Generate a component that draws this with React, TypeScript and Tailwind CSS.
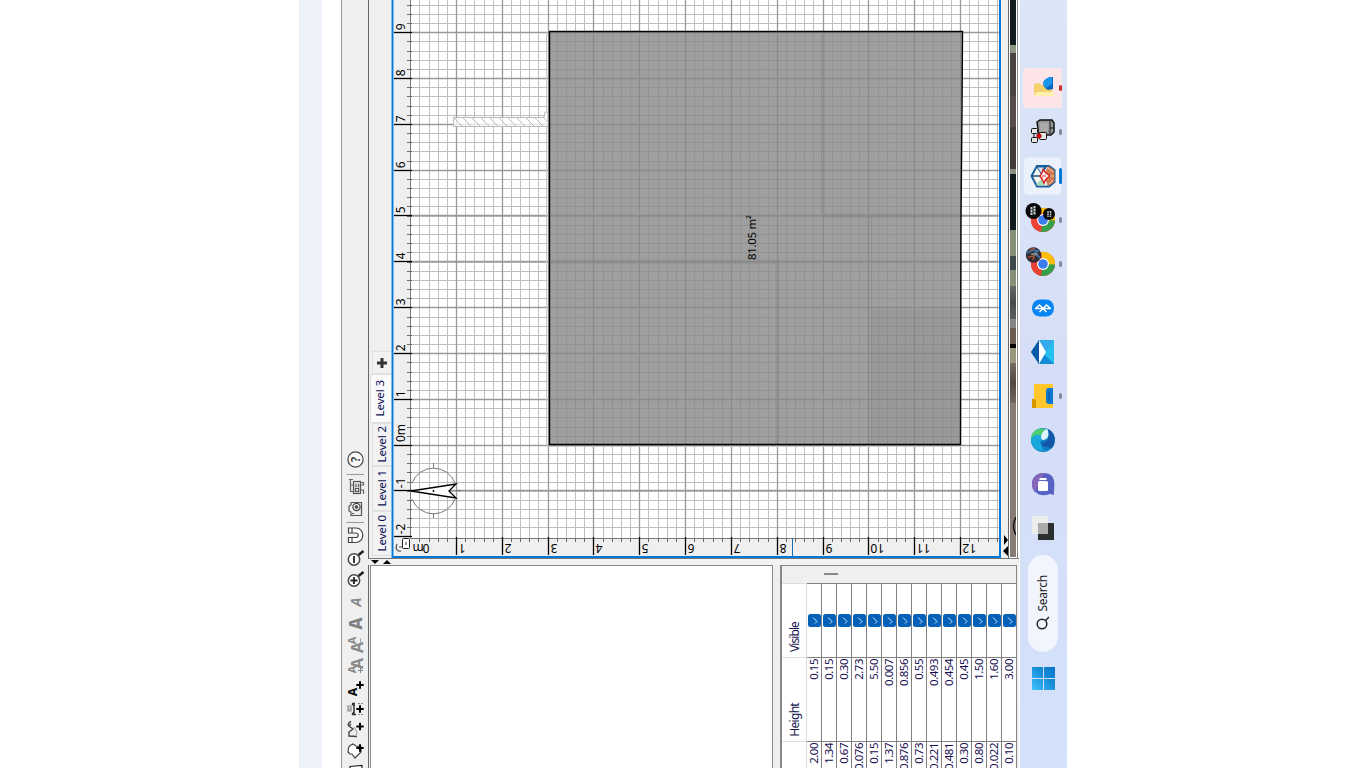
import React from "react";

const FONT = '"Noto Sans", "Open Sans", sans-serif';
const range = (a: number, b: number) => Array.from({ length: b - a + 1 }, (_, i) => a + i);
const px = (v: number) => Math.floor(v) + 0.5;
const yAt = (m: number) => px(445.4 - m * (m < 0 ? 45.3 : 45.9));
const xAt = (m: number) => px(410.7 + m * 45.82);

function Glyph({ h, children }: { h: number; children?: React.ReactNode }) {
  return (
    <svg width="26" height={h} viewBox={`-13 ${-h / 2} 26 ${h}`} className="block shrink-0 overflow-visible" fill="none" stroke="#444" strokeWidth="1.2">
      {children}
    </svg>
  );
}

function Letter({ x, y, size, color, weight = 700, italic = false }: { x: number; y: number; size: number; color: string; weight?: number; italic?: boolean }) {
  return (
    <text transform={`translate(${x} ${y}) rotate(-90)`} fontFamily={FONT} fontSize={size} fontWeight={weight} fontStyle={italic ? "italic" : "normal"} textAnchor="middle" fill={color} stroke="none">
      A
    </text>
  );
}

function Plus({ x = 5, y = -3, r = 3.7 }: { x?: number; y?: number; r?: number }) {
  return <path d={`M${x - r} ${y}h${2 * r}M${x} ${y - r}v${2 * r}`} stroke="#000" strokeWidth="2" />;
}

function Toolbar() {
  return (
    <div className="flex w-[27px] shrink-0 flex-col border-l border-[#999] bg-[#efefef] pt-[448px]">
      <Glyph h={24}>
        <circle cx="0.5" cy="-0.5" r="7.6" fill="#f8f8f8" />
        <text transform="translate(4.7 -0.5) rotate(-90)" textAnchor="middle" fontFamily={FONT} fontSize="12" fontWeight="600" fill="#333" stroke="none">?</text>
      </Glyph>
      <Glyph h={4}><path d="M-8.5 .5H9" stroke="#999" strokeWidth="1" /></Glyph>
      <Glyph h={22}>
        <rect x="-1.500" y="-5.500" width="7" height="12" fill="#ddd" stroke="#555" />
        <path d="M-4.500 -7.500V4.500H-2M-4.500 -2H-2M-2 -7.500H-6M5.500 -4.500H8.500V-2H5.500M5.500 3H8.500V7" stroke="#666" />
        <rect x="0.500" y="1.500" width="3" height="3" fill="#fff" stroke="#555" /><path d="M1 -3V0M3.500 -3V0" stroke="#666" />
      </Glyph>
      <Glyph h={22}>
        <path d="M-4 -6.500H6.500V6.500H-4V3L-6 2V-3L-4 -4Z" fill="#eee" stroke="#555" />
        <circle cx="1.5" cy="-2" r="3.6" stroke="#444" />
        <circle cx="1.5" cy="-2" r="1.2" fill="#666" stroke="#444" />
        <path d="M-3 4.500h2" />
      </Glyph>
      <Glyph h={4}><path d="M-8.5 .5H9" stroke="#999" strokeWidth="1" /></Glyph>
      <Glyph h={22}>
        <path d="M-6.5 -7H1C10 -7 10 7.5 1 7.5H-6.5V2.500H1C4 2.500 4 -2 1 -2H-6.5Z" fill="#fff" />
        <path d="M-3 -7v5M-3 2.500v5" />
      </Glyph>
      <Glyph h={2} />
      <Glyph h={22}>
        <circle cx="-1" cy="0.5" r="5.7" fill="#fff" strokeWidth="1.5" />
        <path d="M-1 -3v7" stroke="#222" strokeWidth="1.8" />
        <path d="M3.5 -4L8.5 -8" stroke="#222" strokeWidth="2.6" />
      </Glyph>
      <Glyph h={22}>
        <circle cx="-1" cy="-0.5" r="5.7" fill="#fff" strokeWidth="1.5" />
        <path d="M-1 -4v7M-4.5 -.5h7" stroke="#222" strokeWidth="1.8" />
        <path d="M3.5 -5L8.5 -9" stroke="#222" strokeWidth="2.6" />
      </Glyph>
      <Glyph h={21}><Letter x={6} y={-0.5} size={14} color="#888" italic /></Glyph>
      <Glyph h={21}><Letter x={7} y={0} size={17} color="#808080" weight={800} /></Glyph>
      <Glyph h={21}>
        <Letter x={7.5} y={3} size={16} color="#888" /><Letter x={1} y={-4} size={11} color="#888" />
        <path d="M5.500 -6v4" stroke="#999" strokeWidth="1" />
      </Glyph>
      <Glyph h={22}>
        <Letter x={7.5} y={-2.5} size={16} color="#888" /><Letter x={1} y={3.5} size={11} color="#888" />
        <path d="M3 4.500h5M5.500 2v5" stroke="#888" strokeWidth="1" />
      </Glyph>
      <Glyph h={22}><Letter x={2} y={4} size={12} color="#111" weight={800} /><Plus x={5} y={-3} /></Glyph>
      <Glyph h={20}>
        <path d="M-3 -5.500H0M-3 5.500H1M-3 -5.500L-1 -3M-3 5.500L-1 3M-1 -6V6" stroke="#333" strokeWidth="1.500" />
        <path d="M3 -5.500H8M3 5.500H8" stroke="#888" strokeDasharray="2 1" />
        <path d="M-7 -3h3v5h-3Z M-7 0h3" stroke="#888" />
        <Plus x={5} y={0} />
      </Glyph>
      <Glyph h={22}>
        <path d="M-4 -7.500C-7 -6 -7.500 -4 -6 -3L-2 0L-6 3V7L2 7.500M-6 -3L-4 -5" stroke="#444" strokeWidth="1.4" transform="translate(0 -1)" />
        <path d="M-1 -3L2 2L1 5" stroke="#aaa" /><Plus x={5} y={-3.5} />
      </Glyph>
      <Glyph h={20}>
        <path d="M-4 -6C-8 -4 -6 -2 -7 1L-5 3H-3L0 7L6 1V-4L1 -5L-2 -7Z" fill="#fff" />
        <Plus x={5} y={-3} />
      </Glyph>
      <Glyph h={16}><path d="M-5 -2.5L7 -3.5V9H-5Z" fill="#fff" stroke="#222" /></Glyph>
    </div>
  );
}

function Tab({ label, className }: { label: string; className: string }) {
  return (
    <div className={"flex shrink-0 items-center justify-center border border-r-0 border-[#e0e0e0] text-[#0c0c55] " + className}>
      <span className="rotate-180 whitespace-nowrap text-[11.5px] leading-[14px] tracking-[-0.1px] [writing-mode:vertical-rl]">{label}</span>
    </div>
  );
}

function LevelTabs() {
  return (
    <div className="flex w-[23px] shrink-0 flex-col items-end border-l border-[#666] bg-[#efefef] pt-[351px]">
      <div className="flex h-[23px] w-[19px] items-center justify-center border border-r-0 border-[#e0e0e0] bg-[#f2f2f2]">
        <svg width="12" height="12" viewBox="0 0 12 12"><path d="M1 6h10M6 1v10" stroke="#333" strokeWidth="3" /></svg>
      </div>
      <Tab label="Level 3" className="h-[49px] w-[21px] bg-[#fafafa] pr-[2px]" />
      <Tab label="Level 2" className="h-[43px] w-[19px] bg-[#f2f2f2]" />
      <Tab label="Level 1" className="h-[45px] w-[19px] bg-[#f2f2f2]" />
      <Tab label="Level 0" className="h-[45px] w-[19px] bg-[#f2f2f2]" />
    </div>
  );
}

function Plan() {
  const minorX = range(1, 64).map((i) => px(410.7 + i * 9.164));
  const minorY = range(-9, 48).map((i) => px(445.4 - i * 9.17));
  return (
    <svg width="610" height="558" viewBox="391 0 610 558" className="block shrink-0" fontFamily={FONT} fontSize="12">
      <defs>
        <pattern id="hatch" width="9" height="9" x="3" y="117" patternUnits="userSpaceOnUse"><path d="M0 0L9 9" stroke="#bdbdbd" strokeWidth="1" /></pattern>
      </defs>
      <rect x="391" width="610" height="558" fill="#fff" />
      <g stroke="#bebebe" strokeWidth="1">
        {minorX.map((x) => <path key={x} d={`M${x} 0V538`} />)}
        {minorY.map((y) => <path key={y} d={`M411 ${y}H999`} />)}
      </g>
      <g stroke="#999" strokeWidth="1.3">
        {range(1, 12).map((i) => <path key={i} d={`M${xAt(i)} 0V538`} />)}
        {range(-1, 9).map((i) => <path key={i} d={`M411 ${yAt(i)}H999`} />)}
      </g>
      <path d="M453.5 117.5H544L545 112H548V126.500H453.5Z" fill="#fff" fillOpacity=".75" />
      <path d="M453.5 117.5H544L545 112H548V126.500H453.5Z" fill="url(#hatch)" stroke="#bbb" />
      <path d="M546.5 32V111M546.5 126V446.5H961" stroke="#ccc" fill="none" />
      <path d="M549.5 31.5H962.5L961 216L960.5 444.5H549.5Z" fill="#878787" fillOpacity=".8" />
      <path d="M871 310H960V444H871Z" fill="#555" fillOpacity=".07" />
      <path d="M821.5 32V217H959M824 32V214H959M868.5 217V444M871.5 217V444M550 260H778.5V444M776 262V444M550 263H776" stroke="#777" strokeOpacity=".35" fill="none" />
      <path d="M549.5 31.5H962.5L962 110L961 216L960.5 444.5H549.5Z" fill="none" stroke="#000" strokeWidth="1.4" />
      <text transform="translate(756 260) rotate(-90)" fontSize="11.5" textLength="45" fill="#000">81.05 m²</text>

      <rect x="394" width="17" height="556" fill="#efefef" />
      <rect x="394" y="538" width="605" height="18" fill="#efefef" />
      <path d="M410.5 0V538.5H999" stroke="#777" fill="none" />
      <g stroke="#666">
        {minorX.map((x) => <path key={x} d={`M${x} 538V542`} />)}
        {minorY.map((y) => <path key={y} d={`M407 ${y}H412`} />)}
      </g>
      <g stroke="#000" strokeWidth="1.3">
        {range(1, 12).map((i) => <path key={i} d={`M${xAt(i)} 537V555`} />)}
        {range(-2, 9).map((i) => <path key={i} d={`M394 ${yAt(i)}H412`} />)}
      </g>
      {range(-2, 9).map((i) => (
        <text key={i} transform={`translate(405 ${yAt(i) - (i === 0 ? 3.5 : 2.2)}) rotate(-90)`}>{i === 0 ? "0m" : i}</text>
      ))}
      {range(0, 12).map((i) => (
        <text key={i} transform={`translate(${xAt(i) + 2} 544) rotate(180)`} textAnchor="end" textLength={i === 0 ? 17 : undefined}>{i === 0 ? "0m" : i}</text>
      ))}
      <path d="M792.5 538V556" stroke="#1670b8" />
      <path d="M397 544C395 549 397 552 401 551M399 547H404" fill="none" stroke="#555" strokeWidth="1.2" />
      <rect x="402.5" y="538.5" width="7" height="10" rx="1" fill="#fff" stroke="#222" />
      <path d="M406 542v3" stroke="#333" />

      <g fill="none" stroke="#777">
        <path d="M412 483A23 23 0 0 1 455 483M412 499A23 23 0 0 0 455 499" />
        <path d="M433.5 463V468M433.5 513V518M456 490.5H461" />
      </g>
      <path d="M411 491L456 484L449 491L456 498Z" fill="#fff" stroke="#000" strokeWidth="1.3" />
      <circle cx="433.5" cy="491" r=".9" />
      <path d="M392.5 0V557H1000V0" fill="none" stroke="#0078d7" strokeWidth="2" />
    </svg>
  );
}

function SceneStrip() {
  return (
    <div className="flex w-[18px] shrink-0">
      <div className="flex w-[8px] flex-col border-r border-[#666] bg-[#efefef] pt-[535px]">
        <svg width="7" height="22" className="block"><path d="M3 0L7 5L3 10ZM7 11L2 16L7 21Z" fill="#000" /></svg>
      </div>
      <div className="flex w-[9px] flex-col border-r border-[#888] bg-white pl-[1px] pr-[1px]">
        <div className="h-[45px] bg-[#121c1f]" />
        <div className="h-[8px] bg-[#8a9680]" />
        <div className="h-[43px] bg-[#4b4341]" />
        <div className="h-[31px] bg-[#554b49]" />
        <div className="h-[42px] bg-[#423b39]" />
        <div className="h-[5px] bg-[#889080]" />
        <div className="h-[56px] bg-[#101a1c]" />
        <div className="h-[26px] bg-[#849078]" />
        <div className="h-[14px] bg-[#3d4a4c]" />
        <div className="h-[16px] bg-[#87917a]" />
        <div className="h-[33px] bg-linear-to-b from-[#666b6b] via-[#454b4b] to-[#5c6060]" />
        <div className="h-[9px] bg-[#858585]" />
        <div className="h-[16px] bg-[#6b5b50]" />
        <div className="h-[4px] bg-black" />
        <div className="h-[15px] bg-[#99987a]" />
        <div className="h-[40px] bg-linear-to-b from-[#756b63] via-[#50473f] to-[#706760]" />
        <div className="h-[154px] overflow-hidden bg-[#867b75] pt-[112px]">
          <svg width="6" height="22" className="block"><path d="M6 2Q1 11 6 20" fill="none" stroke="#111" strokeWidth="1.5" /></svg>
        </div>
      </div>
      <div className="w-px bg-white" />
    </div>
  );
}

const rows: [string, string][] = [
  ["0.15", "2.00"], ["0.15", "1.34"], ["0.30", "0.67"], ["2.73", "0.076"], ["5.50", "0.15"], ["0.007", "1.37"], ["0.856", "0.876"],
  ["0.55", "0.73"], ["0.493", "0.221"], ["0.454", "0.481"], ["0.45", "0.30"], ["1.50", "0.80"], ["1.60", "0.022"], ["3.00", "0.10"],
];

function Value({ v }: { v: string }) {
  return <span className="rotate-180 text-[11.5px] leading-[14px] tracking-[-0.5px] [writing-mode:vertical-rl]">{v}</span>;
}

function FurnitureTable() {
  return (
    <div className="flex h-[203px] w-[237px] shrink-0 flex-col overflow-hidden border-l-2 border-r border-t border-[#888] bg-white">
      <div className="h-[17px] shrink-0 bg-[#efefef] pl-[42px] pt-[7px]"><div className="h-[2px] w-[14px] bg-[#888]" /></div>
      <div className="flex h-[190px] shrink-0">
        <div className="flex w-[25px] shrink-0 flex-col border-r border-[#ddd] text-[12px] leading-[16px] text-[#15154f]">
          <div className="flex h-[75px] shrink-0 items-end border-b border-t border-[#ddd] pb-[5px] pl-[5px]"><span className="rotate-180 tracking-[-0.9px] [writing-mode:vertical-rl]">Visible</span></div>
          <div className="flex h-[84px] shrink-0 items-end border-b border-[#ddd] pb-[4px] pl-[5px]"><span className="rotate-180 tracking-[-0.7px] [writing-mode:vertical-rl]">Height</span></div>
        </div>
        {rows.map(([h, d], i) => (
          <div key={i} className="flex w-[15px] shrink-0 flex-col items-center border-r border-t border-[#808080] text-[#160b50]">
            <div className="flex h-[74px] w-full shrink-0 justify-center border-b border-[#808080] pt-[30px]">
              <svg width="13" height="13" viewBox="0 0 13 13"><rect width="13" height="13" rx="2.5" fill="#0561b8" /><path d="M5 3.500L9 7.500L7 9.500" fill="none" stroke="#d8eaff" strokeWidth="1" /></svg>
            </div>
            <div className="flex h-[84px] w-full shrink-0 items-start justify-center border-b border-[#808080] pt-[1px]"><Value v={h} /></div>
            <div className="h-[60px] shrink-0 pt-[1px]"><Value v={d} /></div>
          </div>
        ))}
      </div>
    </div>
  );
}

function Chrome() {
  return (
    <>
      <circle cx="22" cy="22" r="12" fill="#ea4335" />
      <path d="M22 22L12 28.5A12 12 0 0 0 34 21Z" fill="#34a04b" />
      <path d="M22 22L20 10A12 12 0 0 1 34 22.5Z" fill="#fbbc05" />
      <path d="M22 22L11.5 16A12 12 0 0 0 20 33.800Z" fill="#ea4335" />
      <circle cx="22" cy="22" r="6" fill="#fff" /><circle cx="22" cy="22" r="4.8" fill="#3b7ded" />
    </>
  );
}

function TaskItem({ children, dot }: { children: React.ReactNode; dot?: string }) {
  return (
    <div className="flex h-[44px] shrink-0 items-center">
      <svg width="40" height="44" viewBox="1 0 40 44" className="block shrink-0">{children}</svg>
      {dot && <div className={"-ml-[3px] w-[3px] rounded-full " + dot} />}
    </div>
  );
}

function Taskbar() {
  return (
    <div className="flex w-[47px] shrink-0 flex-col bg-linear-to-b from-[#dbe6f8] via-[#d5def6] to-[#d3e1fb] pl-[2px] pt-[66px]">
      <TaskItem dot="h-[6px] bg-[#c4302b]">
        <rect x="2" y="2" width="40" height="40" rx="4" fill="#fde4e6" />
        <path d="M13 18L18 17L21 19H31V29H13Z" fill="#f4d16b" /><path d="M13 30L15 26H33V30Z" fill="#fff0b0" />
        <path d="M29 11H32V23L27 24C21 21 21 15 25 13Z" fill="#0c65bd" /><path d="M28 11C21 15 21 19 25 22L31 18V11Z" fill="#1995eb" />
      </TaskItem>
      <TaskItem dot="h-[6px] bg-[#83899b]">
        <path d="M16 12L19 10H31L33 13V22L30 25H18Z" fill="#999" stroke="#111" strokeWidth="1.5" />
        <path d="M29 11V24M29 18H33" stroke="#111" /><path d="M18 12H28V22H18Z" fill="#aaa" stroke="#777" strokeDasharray="1 1" />
        <g fill="#e7e7e7" stroke="#111"><rect x="10.5" y="18.500" width="6" height="5" rx="1" /><rect x="10.5" y="27.500" width="6" height="5" rx="1" /><rect x="18.500" y="22.500" width="7" height="7" rx="1" /></g>
        <path d="M13 23V28M16 25H18" stroke="#111" /><circle cx="18" cy="26" r="2.3" fill="#e00000" stroke="#700" strokeWidth=".6" />
      </TaskItem>
      <TaskItem dot="h-[16px] bg-[#0078d4]">
        <rect x="2.500" y="3" width="38" height="38" rx="4" fill="#ecf2fd" stroke="#dce5f5" />
        <path d="M10.500 22L16 12H28L33.500 16V28L28 32.500H16Z" fill="#f5f5f0" stroke="#1b5f9c" strokeWidth="2" />
        <path d="M23 22L27 12L33.500 16V28L27 32Z" fill="#cd7850" /><path d="M21 21L16 13H25Z" fill="#d8edf8" stroke="#165d96" />
        <path d="M15 31L21 24L25 32Z" fill="#a9d9bc" /><path d="M11 22H20M25 12L22 17" stroke="#174f7e" strokeWidth="1.5" />
        <path d="M22 15.500L25 19L29 22L25 25L23 29L21 25L19 22L21 19Z" fill="#fff" stroke="#db2424" strokeWidth="1.5" /><path d="M22 21V23.500M24 20.500V23" stroke="#d22" />
        <path d="M27 14L32 18M28 30L32 26M29 22H33" stroke="#fbd6a5" />
      </TaskItem>
      <TaskItem dot="h-[6px] bg-[#83899b]">
        <Chrome />
        <circle cx="12.500" cy="13" r="8" fill="#080808" /><circle cx="28" cy="16" r="6" fill="#080808" />
        <path d="M10.500 9V17M13.500 8V17" stroke="#c5cfd2" strokeWidth="2" strokeDasharray="2.500 .5" /><path d="M27 13V19M29.500 13V19" stroke="#bcc6ca" strokeWidth="1.500" strokeDasharray="2 .5" />
      </TaskItem>
      <TaskItem dot="h-[6px] bg-[#83899b]">
        <Chrome />
        <circle cx="12.500" cy="13" r="7.700" fill="#302b35" /><path d="M6 11Q12 7 17 9L13 12Q18 14 19 16" stroke="#39739c" strokeWidth="2" fill="none" />
        <path d="M7 15L13 14L12 18M9 8L14 6" stroke="#a55039" strokeWidth="1.7" fill="none" /><path d="M10 12L17 12" stroke="#c2b18b" />
      </TaskItem>
      <TaskItem>
        <rect x="11" y="13.500" width="22" height="17" rx="8" fill="#0785f2" />
        <path d="M18.500 26L25.500 19L29.500 22.500M14.500 22.500L18.500 19L25.500 26M14 22.500H30" fill="none" stroke="#fff" strokeWidth="1.500" />
      </TaskItem>
      <TaskItem>
        <path d="M10 22L18 10H33V34H18Z" fill="#1689d8" /><path d="M33 10V34L21 22Z" fill="#25c0ed" /><path d="M10 22L18 10V34Z" fill="#075ba8" /><path d="M18 10H33L25 22Z" fill="#35a9ed" /><path d="M18 10L25 22L18 34Z" fill="#fff" />
      </TaskItem>
      <TaskItem dot="h-[6px] bg-[#83899b]">
        <path d="M13 10H32V34H13Z" fill="#ffc72c" /><path d="M11 25Q15 24 15 28V34H11Z" fill="#d99500" />
        <path d="M32 14H27Q25 14 25 17V27Q25 30 28 30H32Z" fill="#0b78cf" /><path d="M28 17V27" stroke="#07559f" />
      </TaskItem>
      <TaskItem>
        <circle cx="22" cy="22" r="12" fill="#127fc9" />
        <path d="M10 22C10 12 19 8 27 12L27 21C19 18 18 26 23 33C14 33 10 28 10 22Z" fill="#19a9dd" />
        <path d="M10 21C11 10 21 9 26 12L23 19C17 15 12 17 10 21Z" fill="#4dcc70" />
        <path d="M26 11Q30 17 25 21Q20 24 20 18Q22 12 26 11Z" fill="#dcf3fb" />
        <path d="M27 11C34 14 36 24 31 30C27 29 21 30 19 23C22 27 30 24 27 11Z" fill="#1159a6" />
      </TaskItem>
      <TaskItem>
        <path d="M22 11C37 11 33 25 33 33L29 32C19 36 11 30 11 22C11 15 16 11 22 11Z" fill="#5962c5" />
        <path d="M11 22C11 15 17 11 23 11L14 30Q11 27 11 22Z" fill="#8466ba" />
        <rect x="17" y="19" width="10" height="10" rx="1.500" fill="#fff" /><rect x="18.500" y="16" width="7" height="2" fill="#fff" />
      </TaskItem>
      <TaskItem>
        <rect x="17" y="17" width="16" height="17" fill="#2b2f30" /><path d="M11 10H27V28H11Z" fill="#eeeeec" fillOpacity=".92" /><rect x="17" y="17" width="10" height="11" fill="#aaa" />
      </TaskItem>
      <div className="ml-[6px] mt-[5px] flex h-[97px] w-[30px] shrink-0 flex-col items-center rounded-full bg-[#f2f5fd] pt-[20px]">
        <span className="rotate-180 text-[12px] leading-[16px] tracking-[-0.25px] text-[#222] [writing-mode:vertical-rl]">Search</span>
        <svg width="16" height="16" viewBox="0 0 16 16" className="mt-[4px]"><circle cx="7" cy="9" r="4.800" fill="none" stroke="#222" strokeWidth="1.500" /><path d="M10.500 5.500L14 2" stroke="#222" strokeWidth="1.500" /></svg>
      </div>
      <svg width="40" height="44" viewBox="1 0 40 44" className="mt-[4px] block shrink-0">
        <defs><linearGradient id="win" x1="0" y1="1" x2="1" y2="0"><stop stopColor="#40c4fc" /><stop offset=".6" stopColor="#168bd7" /><stop offset="1" stopColor="#0873c8" /></linearGradient></defs>
        <path d="M11 11H22V22H11ZM23 11H34V22H23ZM11 23H22V34H11ZM23 23H34V34H23Z" fill="url(#win)" />
      </svg>
    </div>
  );
}

export default function App() {
  return (
    <div className='flex h-[768px] w-[1366px] overflow-hidden bg-white pl-[299px] font-["Noto_Sans","Open_Sans",sans-serif]'>
      <div className="w-[23px] shrink-0 bg-[#eef3fb]" />
      <div className="w-[19px] shrink-0" />
      <Toolbar />
      <main className="flex w-[651px] shrink-0 flex-col bg-[#efefef]">
        <div className="flex h-[558px]">
          <LevelTabs />
          <Plan />
          <SceneStrip />
        </div>
        <div className="flex h-[7px] shrink-0 border-t border-[#777] bg-[#f2f2f2]">
          <svg width="24" height="6"><path d="M3 1H11L7 5ZM15 5H23L19 1Z" fill="#000" /></svg>
        </div>
        <div className="flex h-[203px] shrink-0 border-l border-[#666] pl-[1px]">
          <div className="h-full w-[403px] shrink-0 border border-b-0 border-[#888] bg-white" />
          <div className="w-[7px] shrink-0" />
          <FurnitureTable />
        </div>
      </main>
      <div className="w-px shrink-0 bg-white" />
      <Taskbar />
    </div>
  );
}
